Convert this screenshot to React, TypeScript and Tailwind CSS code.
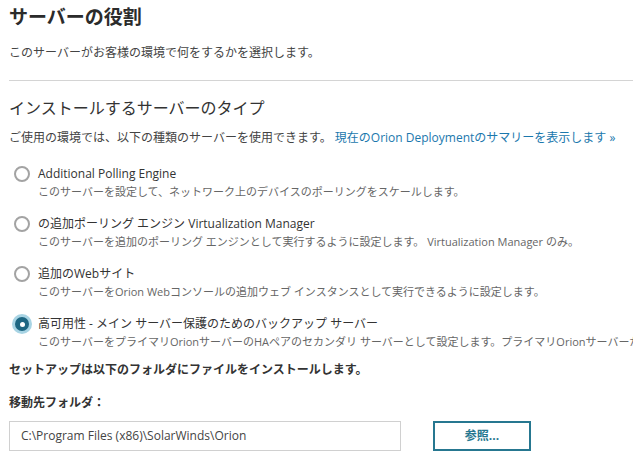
import React from "react";

const FONT = "font-['Open_Sans','Noto_Sans_CJK_JP',sans-serif]";

type Opt = { label: string; desc: string; selected?: boolean };

const options: Opt[] = [
  {
    label: "Additional Polling Engine",
    desc: "このサーバーを設定して、ネットワーク上のデバイスのポーリングをスケールします。",
  },
  {
    label: "の追加ポーリング エンジン Virtualization Manager",
    desc: "このサーバーを追加のポーリング エンジンとして実行するように設定します。 Virtualization Manager のみ。",
  },
  {
    label: "追加のWebサイト",
    desc: "このサーバーをOrion Webコンソールの追加ウェブ インスタンスとして実行できるように設定します。",
  },
  {
    label: "高可用性 - メイン サーバー保護のためのバックアップ サーバー",
    desc: "このサーバーをプライマリOrionサーバーのHAペアのセカンダリ サーバーとして設定します。プライマリOrionサーバーが停止した場合に引き継ぎます。",
    selected: true,
  },
];

function Radio({ selected }: { selected?: boolean }) {
  return (
    <div className="w-[20px] h-[20px] flex items-center justify-center shrink-0">
      {selected ? (
        <div className="w-[20px] h-[20px] rounded-full bg-[#a8d4e4] flex items-center justify-center">
          <div className="w-[14px] h-[14px] rounded-full bg-[#1d6682] flex items-center justify-center">
            <div className="w-[5px] h-[5px] rounded-full bg-white" />
          </div>
        </div>
      ) : (
        <div className="w-[16px] h-[16px] rounded-full border-2 border-[#a3a3a3] bg-white" />
      )}
    </div>
  );
}

export default function App() {
  return (
    <div
      className={`w-[633px] h-[462px] overflow-hidden bg-white pl-[9px] pt-[5px] text-[#333] whitespace-nowrap ${FONT}`}
    >
      <div className="text-[19px] leading-[24px] font-bold text-[#2b2b2b]">サーバーの役割</div>
      <div className="mt-[15px] text-[12px] leading-[18px] text-[#444]">
        このサーバーがお客様の環境で何をするかを選択します。
      </div>
      <div className="mt-[18px] border-t border-[#d4d4d4]" />
      <div className="mt-[17px] text-[16px] leading-[20px] text-[#333]">
        インストールするサーバーのタイプ
      </div>
      <div className="mt-[11px] text-[12px] leading-[18px] text-[#444]">
        ご使用の環境では、以下の種類のサーバーを使用できます。
        <span className="text-[#1b78ad]">
          {" "}
          現在のOrion Deploymentのサマリーを表示します »
        </span>
      </div>

      <div className="mt-[18px] flex flex-col gap-[15px]">
        {options.map((o) => (
          <div key={o.label} className="flex flex-col">
            <div className="flex items-center h-[18px]">
              <div className="ml-[3px]">
                <Radio selected={o.selected} />
              </div>
              <div className="ml-[6px] text-[12px] leading-[18px] text-[#333]">{o.label}</div>
            </div>
            <div className="mt-[1px] pl-[29px] text-[11px] leading-[16px] text-[#666]">
              {o.desc}
            </div>
          </div>
        ))}
      </div>

      <div className="mt-[11px] text-[12px] leading-[18px] font-bold text-[#333]">
        セットアップは以下のフォルダにファイルをインストールします。
      </div>
      <div className="mt-[15px] text-[12px] leading-[18px] font-bold text-[#333]">
        移動先フォルダ：
      </div>
      <div className="mt-[9px] flex items-center">
        <div className="w-[392px] h-[30px] border border-[#d0d0d0] flex items-center pl-[11px] text-[12px] text-[#444]">
          C:\Program Files (x86)\SolarWinds\Orion
        </div>
        <button className="ml-[32px] w-[98px] h-[30px] border-2 border-[#267790] text-[#267790] text-[12px] font-bold flex items-center justify-center bg-white">
          参照...
        </button>
      </div>
    </div>
  );
}
